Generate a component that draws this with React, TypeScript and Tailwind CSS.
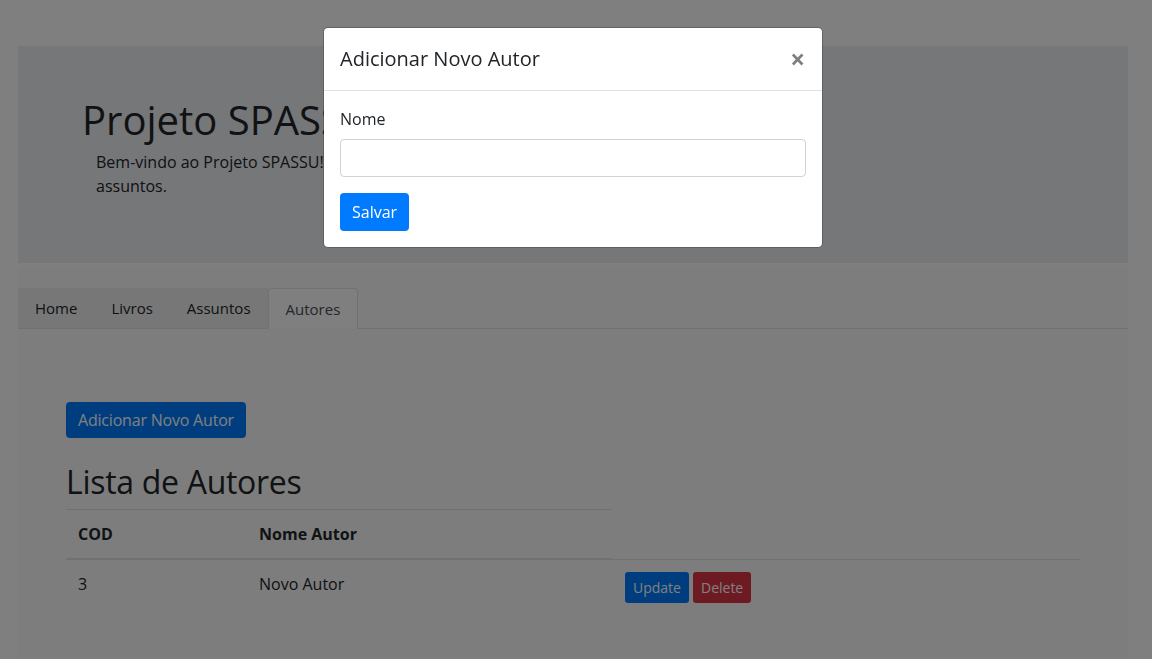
import React from 'react';

const tabs = ['Home', 'Livros', 'Assuntos', 'Autores'];

const autores = [{ cod: 3, nome: 'Novo Autor' }];

export default function App() {
  return (
    <div className="relative min-h-screen bg-white font-['Open_Sans',sans-serif] text-[16px] leading-[24px] text-[#212529]">
      <header className="ml-[18px] mt-[46px] w-[1110px] bg-[#eceef1] pl-16 pt-[50px] pb-[65px]">
        <h1 className="mb-[6px] text-[40px] leading-[48px] font-medium">Projeto SPASSU</h1>
        <p className="ml-[14px]">
          Bem-vindo ao Projeto SPASSU! Este sistema permite gerenciar livros, autores e
          <br />
          assuntos.
        </p>
      </header>

      <main className="ml-[18px] mt-1 w-[1110px] bg-[#fafafa] pt-[21px] pb-[42px]">
        <nav className="flex border-b border-[#dee2e6] text-[15px]">
          {tabs.map((tab) => {
            const active = tab === 'Autores';
            return active ? (
              <div
                key={tab}
                className="-mb-px rounded-t-[4px] border border-b-0 border-[#dee2e6] bg-[#fefefe] px-[17px] py-2 text-[#495057]"
              >
                {tab}
              </div>
            ) : (
              <div key={tab} className="bg-[#efefef] px-[17px] py-2 text-[#212529]">
                {tab}
              </div>
            );
          })}
        </nav>

        <section className="px-12 pt-[73px]">
          <button className="mb-[25px] h-[36px] rounded-[4px] bg-[#007bff] px-3 tracking-[-0.2px] text-white">
            Adicionar Novo Autor
          </button>
          <h2 className="mb-2 text-[32px] leading-[38px] font-medium tracking-[-0.3px]">Lista de Autores</h2>

          <table className="w-[1014px] border-collapse text-left">
            <thead>
              <tr>
                <th className="w-[181px] border-t border-b-2 border-[#dee2e6] p-3 align-bottom font-bold">COD</th>
                <th className="w-[365px] border-t border-b-2 border-[#dee2e6] p-3 align-bottom font-bold">Nome Autor</th>
              </tr>
            </thead>
            <tbody>
              {autores.map((a) => (
                <tr key={a.cod}>
                  <td className="border-t border-[#dee2e6] p-3 align-top">{a.cod}</td>
                  <td className="border-t border-[#dee2e6] p-3 align-top">{a.nome}</td>
                  <td className="border-t border-[#dee2e6] p-3 pl-[13px] align-top">
                    <div className="flex gap-1">
                      <button className="h-[31px] rounded-[3px] bg-[#007bff] px-2 text-[14px] leading-[21px] text-white">
                        Update
                      </button>
                      <button className="h-[31px] rounded-[3px] bg-[#dc3545] px-2 text-[14px] leading-[21px] text-white">
                        Delete
                      </button>
                    </div>
                  </td>
                </tr>
              ))}
            </tbody>
          </table>
        </section>
      </main>

      {/* modal backdrop */}
      <div className="fixed inset-0 z-40 bg-black/50" />

      <div className="fixed left-[323px] top-[27px] z-50 w-[500px] rounded-[5px] border border-black/20 bg-white bg-clip-padding">
        <div className="flex items-start justify-between border-b border-[#dee2e6] p-4">
          <h5 className="text-[20px] leading-[30px] font-medium">Adicionar Novo Autor</h5>
          <button className="mr-[1px] text-[26px] leading-[30px] font-bold text-black/50">×</button>
        </div>
        <div className="p-4">
          <label className="mb-2 block">Nome</label>
          <input
            type="text"
            className="mb-4 block h-[38px] w-full rounded-[4px] border border-[#ced4da] px-3"
          />
          <button className="h-[38px] rounded-[4px] bg-[#007bff] px-3 text-white">Salvar</button>
        </div>
      </div>
    </div>
  );
}
